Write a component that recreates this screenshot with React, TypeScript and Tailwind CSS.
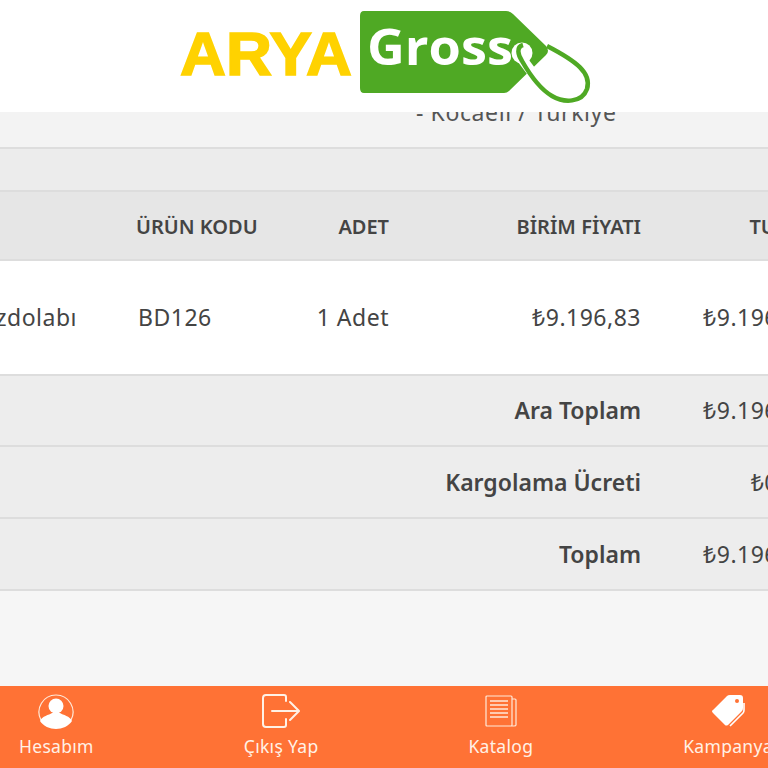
const font = "[font-family:'Noto_Sans',sans-serif]";

function Logo() {
	return (
		<svg width="420" height="104" viewBox="0 0 420 104" className="mt-[1px] ml-[2px]">
			<text
				x="0"
				y="74"
				textLength="172"
				lengthAdjust="spacingAndGlyphs"
				fill="#ffd200"
				stroke="#ffd200"
				strokeWidth="1.6"
				className="[font-family:'Liberation_Sans',sans-serif] text-[61px] font-bold"
			>
				ARYA
			</text>
			<path
				d="M184 10h142q4 0 7 3l33 32q4 5 0 9l-37 36q-2 2-5 2H184q-4 0-4-5V15q0-5 4-5z"
				fill="#4fa924"
			/>
			<text
				x="187"
				y="64"
				textLength="146"
				lengthAdjust="spacingAndGlyphs"
				fill="#ffffff"
				className="[font-family:'Open_Sans',sans-serif] text-[50px] font-bold"
			>
				Gross
			</text>
			<circle cx="342" cy="52" r="10.5" fill="#ffffff" />
			<path d="M342 58L357 78" fill="none" stroke="#ffffff" strokeWidth="10" />
			<path
				d="M343 44C336 46 338 54 342 60C350 74 360 88 372 95C384 102 402 102 407 88C412 72 396 60 367 45"
				fill="none"
				stroke="#4fa924"
				strokeWidth="4.5"
			/>
		</svg>
	);
}

const rowCols = "grid grid-cols-[136px_152px_101px_252px_171px] w-[812px] items-center";

function TotalRow({ label, value, className }: { label: string; value: string; className: string }) {
	return (
		<div className={`${rowCols} ${className} border-b-2 border-[#dddddd] bg-[#ededed]`}>
			<div className="col-span-4 text-right text-[23px] font-semibold text-[#444444]">{label}</div>
			<div className="text-right text-[23px] text-[#444444] tracking-[0.5px]">{value}</div>
		</div>
	);
}

function NavItem({ icon, label }: { icon: React.ReactNode; label: string }) {
	return (
		<div className="flex flex-col items-center shrink-0">
			<div className="h-[38px] mt-[6px] flex items-center justify-center">{icon}</div>
			<span className="mt-[3px] text-[17.5px] tracking-[0.3px] text-[#fff1e6] whitespace-nowrap">{label}</span>
		</div>
	);
}

export default function App() {
	return (
		<div className={`${font} h-[768px] w-[768px] overflow-hidden flex flex-col bg-[#f6f6f6]`}>
			<header className="h-[112px] shrink-0 bg-white relative z-10 pl-[178px]">
				<Logo />
			</header>
			<div className="h-[35px] shrink-0 overflow-hidden bg-[#f3f3f3]">
				<div className="-mt-[16px] pl-[416px] text-[23px] leading-[32px] tracking-[0.6px] text-[#555555] whitespace-nowrap">
					- Kocaeli / Türkiye
				</div>
			</div>
			<div className="h-[43px] shrink-0 border-t-2 border-[#dddddd] bg-[#ececec]" />
			<div className={`${rowCols} h-[71px] shrink-0 border-y-2 border-[#dddddd] bg-[#e6e6e6] pt-[3px] text-[20px] font-semibold text-[#444444]`}>
				<div />
				<div>ÜRÜN KODU</div>
				<div className="text-right">ADET</div>
				<div className="text-right">BİRİM FİYATI</div>
				<div className="text-right">TUTAR</div>
			</div>
			<div className={`${rowCols} h-[115px] shrink-0 bg-white border-b-2 border-[#dddddd] text-[23px] text-[#444444] tracking-[0.5px]`}>
				<div className="flex justify-end pr-[59px] whitespace-nowrap">Buzdolabı</div>
				<div className="pl-[2px]">BD126</div>
				<div className="text-right">1 Adet</div>
				<div className="text-right">₺9.196,83</div>
				<div className="text-right">₺9.196,83</div>
			</div>
			<div className="shrink-0">
				<TotalRow className="h-[71px]" label="Ara Toplam" value="₺9.196,83" />
				<TotalRow className="h-[72px]" label="Kargolama Ücreti" value="₺0,00" />
				<TotalRow className="h-[72px]" label="Toplam" value="₺9.196,83" />
			</div>
			<div className="flex-1" />
			<nav className="h-[82px] shrink-0 bg-[#ff7235] flex gap-[150px] pl-[19px]">
				<NavItem
					label="Hesabım"
					icon={
						<svg width="36" height="36" viewBox="0 0 36 36">
							<path d="M3 27A17 17 0 1 1 33 27" fill="none" stroke="#ffe9d9" strokeWidth="1.2" />
							<circle cx="18" cy="13" r="7.5" fill="#fff" />
							<path d="M2 28c2-5 9-6 12-8h8c3 2 10 3 12 8-3 5-10 8-16 8s-13-3-16-8z" fill="#fff" />
						</svg>
					}
				/>
				<NavItem
					label="Çıkış Yap"
					icon={
						<svg width="38" height="34" viewBox="0 0 38 34" fill="none" stroke="#fff1e6" strokeWidth="2" strokeLinecap="round" strokeLinejoin="round">
							<path d="M24 7V3q0-2-2-2H4Q1 1 1 4v26q0 3 3 3h18q2 0 2-2v-6" />
							<path d="M10 17h26M28 8l9 9-9 9" />
						</svg>
					}
				/>
				<NavItem
					label="Katalog"
					icon={
						<svg width="32" height="32" viewBox="0 0 32 32" fill="none" stroke="#ffe9d9" strokeWidth="1.2">
							<path d="M27 2v28q0 1-1 1H2q-1 0-1-1V2q0-1 1-1h24q1 0 1 1zM27 4h3q1 0 1 1v25q0 1-2 1h-3" />
							<path d="M5 6h18M5 10h18M5 14h18M5 18h18M5 22h18" strokeWidth="1.5" />
						</svg>
					}
				/>
				<NavItem
					label="Kampanya"
					icon={
						<svg width="34" height="32" viewBox="0 0 34 32">
							<path d="M19 0h10q3 0 3 3v10q0 2-1 3L17 30q-2 1-3 0L2 18q-2-2 0-3L16 1q1-1 3-1z" fill="#fff" />
							<circle cx="26" cy="6" r="2" fill="#ff7235" />
							<path d="M33 8v7q0 2-1 3L19 31" fill="none" stroke="#fff" strokeWidth="1.6" />
						</svg>
					}
				/>
			</nav>
		</div>
	);
}
